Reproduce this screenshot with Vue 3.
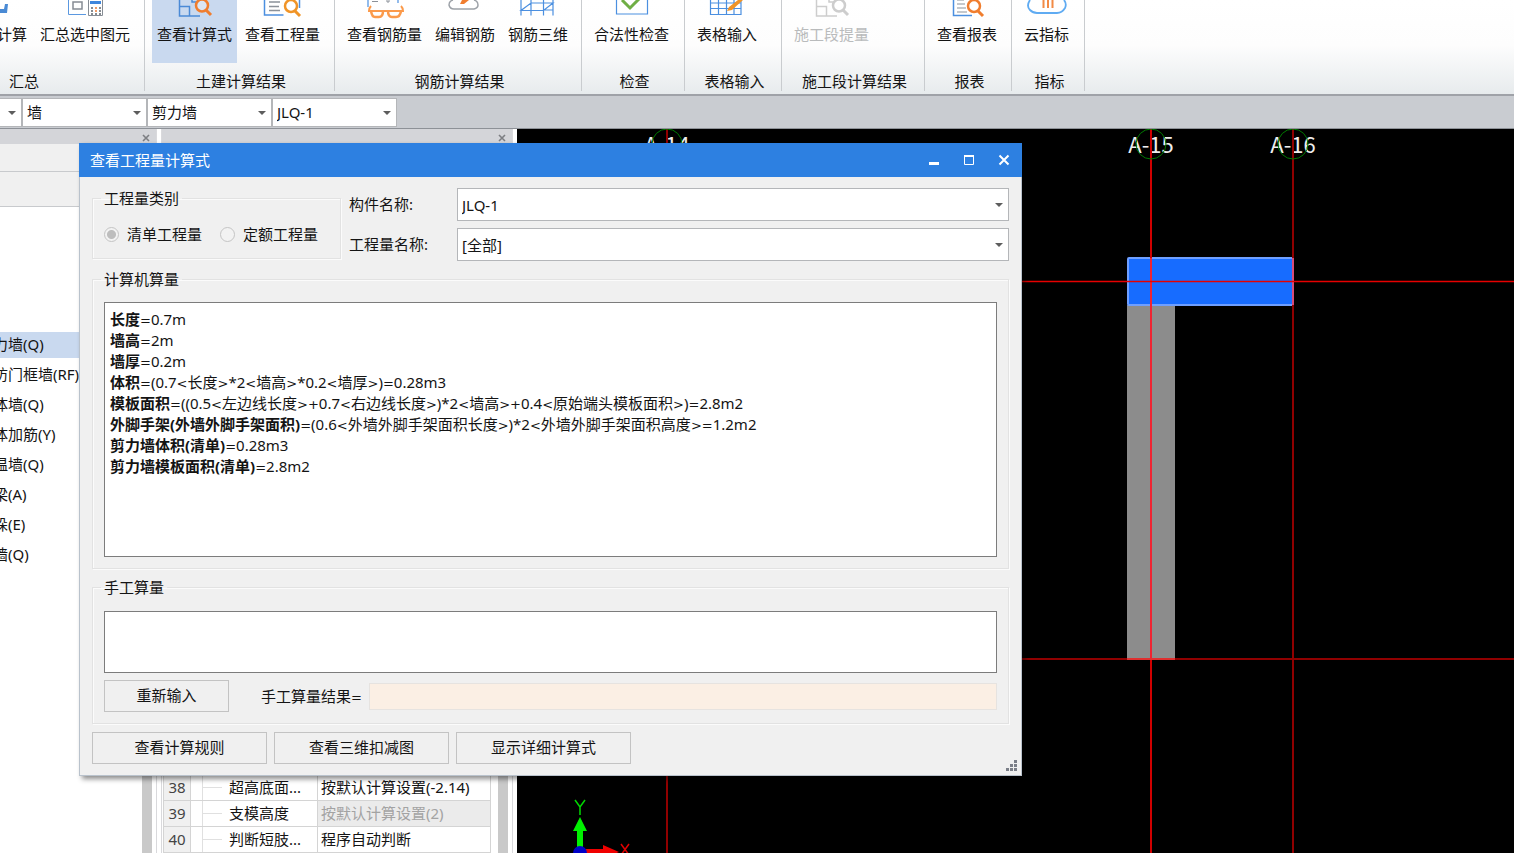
<script setup>
import { ref } from 'vue'

const groups = [
  { label: '汇总', cls: 'g-sum', tools: [{ t: '汇总计算', i: 'sum' }, { t: '汇总选中图元', i: 'pick' }] },
  { label: '土建计算结果', cls: 'g-civil', tools: [{ t: '查看计算式', i: 'formula', on: true }, { t: '查看工程量', i: 'quantity' }] },
  { label: '钢筋计算结果', cls: 'g-rebar', tools: [{ t: '查看钢筋量', i: 'glasses' }, { t: '编辑钢筋', i: 'edit' }, { t: '钢筋三维', i: 'grid3d' }] },
  { label: '检查', cls: 'g-check', tools: [{ t: '合法性检查', i: 'check' }] },
  { label: '表格输入', cls: 'g-table', tools: [{ t: '表格输入', i: 'table' }] },
  { label: '施工段计算结果', cls: 'g-stage', tools: [{ t: '施工段提量', i: 'formula', off: true }] },
  { label: '报表', cls: 'g-report', tools: [{ t: '查看报表', i: 'report' }] },
  { label: '指标', cls: 'g-index', tools: [{ t: '云指标', i: 'cloud' }] }
]

const filters = [
  { name: '楼层', value: '' },
  { name: '构件大类', value: '墙' },
  { name: '构件类型', value: '剪力墙' },
  { name: '构件', value: 'JLQ-1' }
]

const parts = ['剪力墙(Q)', '人防门框墙(RF)', '砌体墙(Q)', '砌体加筋(Y)', '保温墙(Q)', '暗梁(A)', '墙垛(E)', '幕墙(Q)']

const props = [
  { n: 38, name: '超高底面...', value: '按默认计算设置(-2.14)' },
  { n: 39, name: '支模高度', value: '按默认计算设置(2)', off: true },
  { n: 40, name: '判断短肢...', value: '程序自动判断' }
]

const results = [
  ['长度', '=0.7m'],
  ['墙高', '=2m'],
  ['墙厚', '=0.2m'],
  ['体积', '=(0.7<长度>*2<墙高>*0.2<墙厚>)=0.28m3'],
  ['模板面积', '=((0.5<左边线长度>+0.7<右边线长度>)*2<墙高>+0.4<原始端头模板面积>)=2.8m2'],
  ['外脚手架(外墙外脚手架面积)', '=(0.6<外墙外脚手架面积长度>)*2<外墙外脚手架面积高度>=1.2m2'],
  ['剪力墙体积(清单)', '=0.28m3'],
  ['剪力墙模板面积(清单)', '=2.8m2']
].map(([name, text]) => ({ name, tokens: text.split(/([<>=+])/).filter(Boolean) }))

const isOperator = (token) => '<>=+'.includes(token)

const axes = [
  { x: 150, label: 'A-14', c: '#900000' },
  { x: 634, label: 'A-15', c: '#d00000' },
  { x: 776, label: 'A-16', c: '#900000' }
]

const kind = ref('list')
const manual = ref('')
</script>

<template>
  <div class="app">
    <header class="ribbon">
      <section v-for="g in groups" :key="g.label" class="group" :class="g.cls">
        <div class="tools">
          <button v-for="tool in g.tools" :key="tool.t" type="button" class="tool" :class="{ on: tool.on }" :disabled="tool.off">
            <svg class="icon" width="40" height="22" viewBox="0 0 40 22" fill="none" aria-hidden="true">
              <g v-if="tool.i === 'sum'">
                <path d="M10 9H27l1-5h3l-1 9H10z" fill="#4a8ad4" />
              </g>
              <g v-else-if="tool.i === 'pick'">
                <path d="M3.500 0V14.500H21" stroke="#5b98e0" />
                <rect x="8" y="2" width="9" height="7" stroke="#868c94" stroke-width="1.500" />
                <path d="M23.500 0V15.500H37.500V0" stroke="#868c94" />
                <rect x="25" y="1" width="11" height="3" fill="#3f86dc" />
                <path d="M26 8h2M26 11h2M34 8h2M34 11h2M34 14h2" stroke="#5f666e" stroke-width="1.500" />
                <path d="M30 8h2M30 11h2" stroke="#ee7b33" stroke-width="1.500" />
                <path d="M26 14h2M30 14h2" stroke="#5f666e" stroke-width="1.500" />
              </g>
              <g v-else-if="tool.i === 'formula'">
                <path d="M4.500 0V16H25M4.500 6.500H14.500V16M17 0v2h6" :stroke="tool.off ? '#cdcdcd' : '#4b8ad6'" stroke-width="1.500" />
                <circle cx="27" cy="5.500" r="6" :stroke="tool.off ? '#cdcdcd' : '#f07d2e'" stroke-width="2.500" :fill="tool.off ? '#fff' : '#dbe6f5'" />
                <path d="M31 10l5 5" :stroke="tool.off ? '#cdcdcd' : '#f07d2e'" stroke-width="3" />
              </g>
              <g v-else-if="tool.i === 'quantity'">
                <path d="M1.500 0V15H20.500M36.500 0V8" stroke="#4b8fe0" stroke-width="1.500" />
                <path d="M6 2H17M6 6.500H16M6 10.500H17" stroke="#8b9199" stroke-width="1.500" />
                <circle cx="28" cy="6" r="6" stroke="#f09427" stroke-width="2.500" fill="#fff" />
                <path d="M32 11l5 5" stroke="#f09427" stroke-width="3" />
              </g>
              <g v-else-if="tool.i === 'glasses'">
                <path d="M3 0V7M33 0V3" stroke="#4b8fe0" stroke-width="1.200" />
                <path d="M7 1.500H13M22 0v2h2V0" stroke="#8b9199" />
                <path d="M6 6Q4 8 4 11H38Q38 8 36 6" stroke="#fb9a4b" stroke-width="2" />
                <path d="M6 11Q7 17 10 17H14Q18 17 18 11M23 11Q23 17 27 17H31Q35 17 36 11" stroke="#fb9a4b" stroke-width="2.500" />
              </g>
              <g v-else-if="tool.i === 'edit'">
                <path d="M8 0Q4 1 4 5Q5 9 9 9H29Q33 8 33 5Q33 1 29 0" stroke="#9da2a8" stroke-width="1.500" />
                <path d="M15 4l2-4h7l-5 4z" fill="#f07d2e" />
              </g>
              <g v-else-if="tool.i === 'grid3d'">
                <path d="M3 0V15.500M13 0V15.500M25.500 0V15.500M35 0V15.500M3 10.500H25.500L35 3H13zM26 10H35" stroke="#4b8fe0" stroke-width="1.200" />
              </g>
              <g v-else-if="tool.i === 'check'">
                <path d="M4.500 0V14H35.500V0" stroke="#4b8fe0" stroke-width="1.200" />
                <path d="M10 0l8 8 9-9" stroke="#6fae45" stroke-width="3" />
              </g>
              <g v-else-if="tool.i === 'table'">
                <path d="M3.500 0V14.500H34V0M3.500 8.500H34M3.500 3H34M11.500 0V14M19.500 0V14M27 0V14" stroke="#4b8fe0" stroke-width="1.200" />
                <path d="M31 0h5L25 10l-5 1 2-4z" fill="#f09427" />
              </g>
              <g v-else-if="tool.i === 'report'">
                <path d="M6.500 0V15.500H25" stroke="#4b8fe0" stroke-width="1.500" />
                <path d="M10 0H17M10 4H18M10 8H19M10 12H20" stroke="#8b9199" stroke-width="1.200" />
                <circle cx="27" cy="6" r="6" stroke="#f07d2e" stroke-width="2.500" fill="#fff" />
                <path d="M31 11l5 5" stroke="#f07d2e" stroke-width="3" />
              </g>
              <g v-else>
                <path d="M3 0Q-1 6 3 10Q6 13 10 13H30Q35 13 38 8Q40 4 37 0" stroke="#5fabf2" stroke-width="1.800" />
                <path d="M16.500 0V8M21 0V8M25.500 0V8" stroke="#f28a45" stroke-width="2" />
              </g>
            </svg>
            <span>{{ tool.t }}</span>
          </button>
        </div>
        <div class="group-label">{{ g.label }}</div>
      </section>
    </header>

    <nav class="filters">
      <label v-for="f in filters" :key="f.name" class="combo">
        <select :aria-label="f.name">
          <option>{{ f.value }}</option>
        </select>
      </label>
    </nav>

    <main class="work">
      <aside class="nav-panel">
        <div class="panel-head">
          <button type="button" class="close" aria-label="关闭导航">
            <svg width="8" height="8" viewBox="0 0 8 8"><path d="M1 1l6 6M7 1L1 7" stroke="#7d7f83" stroke-width="1.600" /></svg>
          </button>
        </div>
        <div class="band band-a"></div>
        <div class="band band-b"></div>
        <div class="nav-body">
          <ul class="parts">
            <li v-for="(p, i) in parts" :key="p" :class="{ sel: i === 0 }">{{ p }}</li>
          </ul>
          <div class="scroll"></div>
        </div>
      </aside>

      <aside class="prop-panel">
        <div class="panel-head">
          <button type="button" class="close" aria-label="关闭属性">
            <svg width="8" height="8" viewBox="0 0 8 8"><path d="M1 1l6 6M7 1L1 7" stroke="#7d7f83" stroke-width="1.600" /></svg>
          </button>
        </div>
        <div class="prop-body">
          <table class="props">
            <tbody>
              <tr v-for="r in props" :key="r.n">
                <th scope="row">{{ r.n }}</th>
                <td class="name"><i class="branch"></i>{{ r.name }}</td>
                <td class="val" :class="{ off: r.off }">{{ r.value }}</td>
              </tr>
            </tbody>
          </table>
          <div class="scroll"></div>
        </div>
      </aside>

      <section class="canvas">
        <svg class="scene" width="100%" height="100%">
          <rect x="610" y="176" width="48" height="354" fill="#8c8c8c" />
          <rect x="611" y="129" width="165" height="47" rx="1" fill="#176cff" stroke="#6f9fff" stroke-width="2" />
          <text v-for="a in axes" :key="a.label" :x="a.x" y="24" text-anchor="middle" class="axis">{{ a.label }}</text>
          <g v-for="a in axes" :key="a.x">
            <line :x1="a.x" :x2="a.x" y1="0" y2="100%" :stroke="a.c" stroke-width="2" />
            <circle :cx="a.x" cy="15" r="15" fill="none" stroke="#007a00" />
          </g>
          <line x1="634" x2="634" y1="129" y2="530" stroke="#f02432" stroke-width="2" />
          <line x1="776" x2="776" y1="129" y2="176" stroke="#d84a78" stroke-width="2" />
          <line x1="0" x2="100%" y1="152.500" y2="152.500" stroke="#e60000" stroke-width="1.500" />
          <line x1="0" x2="100%" y1="530" y2="530" stroke="#900000" stroke-width="2" />
          <line x1="610" x2="658" y1="530" y2="530" stroke="#e03030" stroke-width="2" />
          <path d="M60 720V702h-4l7-14 7 14h-4v18z" fill="#00f000" />
          <path d="M58 671l5 7 5-7M63 678v8" stroke="#00d800" stroke-width="1.500" fill="none" />
          <path d="M66 720h20v-4l16 7-16 7v-4H66z" fill="#f00000" />
          <path d="M104 715l8 11M112 715l-8 11" stroke="#e00000" stroke-width="1.500" />
          <circle cx="63" cy="724" r="7" fill="#0000c8" />
        </svg>
      </section>
    </main>

    <div class="dialog" role="dialog" aria-labelledby="dlg-title">
      <div class="title-bar">
        <h1 id="dlg-title">查看工程量计算式</h1>
        <button type="button" aria-label="最小化">
          <svg width="12" height="12" viewBox="0 0 12 12"><rect x="1" y="8" width="10" height="3" fill="#fff" /></svg>
        </button>
        <button type="button" aria-label="最大化">
          <svg width="12" height="12" viewBox="0 0 12 12"><path d="M1 1h10v2H1z" fill="#fff" /><path d="M1.500 2v8.500h9V2" fill="none" stroke="#fff" /></svg>
        </button>
        <button type="button" aria-label="关闭">
          <svg width="12" height="12" viewBox="0 0 12 12"><path d="M1.500 1.500l9 9M10.500 1.500l-9 9" stroke="#fff" stroke-width="2" /></svg>
        </button>
      </div>

      <form class="body" @submit.prevent>
        <div class="top">
          <fieldset class="box kinds">
            <legend>工程量类别</legend>
            <label><input v-model="kind" type="radio" name="kind" value="list" />清单工程量</label>
            <label><input v-model="kind" type="radio" name="kind" value="quota" />定额工程量</label>
          </fieldset>
          <div class="fields">
            <label for="part-name">构件名称:</label>
            <span class="combo"><select id="part-name"><option>JLQ-1</option></select></span>
            <label for="qty-name">工程量名称:</label>
            <span class="combo"><select id="qty-name"><option>[全部]</option></select></span>
          </div>
        </div>

        <fieldset class="box auto">
          <legend>计算机算量</legend>
          <div class="sheet">
            <p v-for="r in results" :key="r.name"><b>{{ r.name }}</b><span v-for="(k, i) in r.tokens" :key="i" :class="{ op: isOperator(k) }">{{ k }}</span></p>
          </div>
        </fieldset>

        <fieldset class="box manual">
          <legend>手工算量</legend>
          <textarea v-model="manual" aria-label="手工算量"></textarea>
          <div class="manual-row">
            <button type="button" class="btn" @click="manual = ''">重新输入</button>
            <label for="manual-result">手工算量结果<span class="op">=</span></label>
            <input id="manual-result" type="text" readonly />
          </div>
        </fieldset>

        <div class="actions">
          <button type="button" class="btn">查看计算规则</button>
          <button type="button" class="btn">查看三维扣减图</button>
          <button type="button" class="btn">显示详细计算式</button>
        </div>
      </form>
      <svg class="grip" width="11" height="11" viewBox="0 0 11 11" fill="#7b7f88" aria-hidden="true">
        <path d="M8 0h3v3H8zM4 4h3v3H4zM8 4h3v3H8zM0 8h3v3H0zM4 8h3v3H4zM8 8h3v3H8z" />
      </svg>
    </div>
  </div>
</template>

<style>
html,
body,
#app {
  height: 100%;
}
body {
  margin: 0;
  overflow: hidden;
}
</style>

<style scoped>
.app {
  position: relative;
  height: 100%;
  display: flex;
  flex-direction: column;
  overflow: hidden;
  background: #fff;
  color: #141414;
  font: 15px/20px "Noto Sans", "Noto Sans CJK SC", sans-serif;
}
.app *,
.app *::before,
.app *::after {
  box-sizing: border-box;
}
button,
select,
input,
textarea {
  font: inherit;
  color: inherit;
  margin: 0;
}

.ribbon {
  display: flex;
  flex: none;
  height: 96px;
  padding-bottom: 3px;
  background: linear-gradient(#fff 0, #fdfdfd 45px, #e7ebed 94px);
  border-bottom: 2px solid #9fa2a8;
}
.group {
  display: flex;
  flex-direction: column;
  justify-content: space-between;
  flex: none;
  border-right: 1px solid #c9cccf;
}
.g-sum { width: 244px; margin-left: -99px; }
.g-sum .tools { justify-content: flex-end; padding-right: 9px; }
.g-civil { width: 190px; }
.g-rebar { width: 247px; }
.g-check { width: 103px; }
.g-table { width: 97px; }
.g-stage { width: 143px; }
.g-report { width: 87px; }
.g-index { width: 73px; }
.tools {
  display: flex;
  gap: 3px;
  padding-left: 7px;
}
.tool {
  display: flex;
  flex-direction: column;
  align-items: center;
  height: 63px;
  padding: 0 5px;
  border: 0;
  background: none;
  line-height: 25px;
  white-space: nowrap;
}
.tool.on { background: #c9d9ef; }
.tool:disabled { color: #b9bbbc; }
.icon { display: block; }
.group-label {
  padding-left: 3px;
  text-align: center;
  line-height: 20px;
}

.combo {
  position: relative;
  display: block;
}
.combo select {
  appearance: none;
  display: block;
  width: 100%;
  height: 100%;
  padding: 0 20px 2px 4px;
  border: 1px solid #b4b6b9;
  border-radius: 0;
  background: #fff;
}
.combo::after {
  content: "";
  position: absolute;
  right: 6px;
  top: 50%;
  margin-top: -2px;
  border: 4px solid transparent;
  border-top-color: #5d5d5d;
  border-bottom: 0;
  pointer-events: none;
}
.filters {
  display: flex;
  flex: none;
  height: 33px;
  padding: 2px 0;
  background: #c9ccd1;
  border-bottom: 1px solid #8d9197;
}
.filters .combo { width: 125px; height: 29px; flex: none; }
.filters .combo:first-child { margin-left: -103px; }

.work {
  display: flex;
  flex: 1;
  min-height: 0;
}
.panel-head {
  display: flex;
  justify-content: flex-end;
  flex: none;
  height: 15px;
  background: #d4d5d9;
}
.close {
  display: flex;
  align-items: center;
  padding: 3px 6px 0;
  border: 0;
  background: none;
}
.nav-panel {
  display: flex;
  flex-direction: column;
  width: 157px;
  flex: none;
  border-right: 1px solid #d9d9dc;
}
.band {
  flex: none;
  background: #f0f0f0;
  border-bottom: 1px solid #c8cacd;
}
.band-a { height: 28px; }
.band-b { height: 35px; }
.nav-body {
  display: flex;
  flex: 1;
  min-height: 0;
  padding-right: 4px;
}
.parts {
  flex: 1;
  list-style: none;
  margin: 0;
  padding: 125px 0 0;
  overflow: hidden;
}
.parts li {
  height: 26px;
  margin-bottom: 4px;
  line-height: 25px;
  text-indent: -22px;
  white-space: nowrap;
}
.parts .sel { background: #c9d9ef; }
.scroll {
  width: 10px;
  flex: none;
  background: #c9c9c9;
}
.prop-panel {
  display: flex;
  flex-direction: column;
  width: 352px;
  flex: none;
  margin: 0 4px;
  border: solid #d9d9dc;
  border-width: 0 1px;
}
.prop-body {
  display: flex;
  align-items: flex-end;
  justify-content: space-between;
  flex: 1;
  padding: 0 4px 0 1px;
  min-height: 0;
}
.prop-body .scroll { align-self: stretch; }
.props {
  border-collapse: collapse;
  table-layout: fixed;
  width: 328px;
}
.props th,
.props td {
  height: 26px;
  padding: 0 0 0 3px;
  border: 1px solid #d4d4d4;
  line-height: 25px;
  white-space: nowrap;
}
.props th {
  width: 27px;
  padding: 0;
  font-weight: 400;
  color: #444;
  background: #f0f0f0;
  text-align: center;
}
.props .name { width: 127px; padding-left: 11px; }
.branch {
  display: inline-block;
  width: 20px;
  height: 25px;
  margin-right: 7px;
  vertical-align: top;
  border-left: 1px solid #e0e0e0;
  background: linear-gradient(#e0e0e0, #e0e0e0) 0 12px / 100% 1px no-repeat;
}
.props .off { color: #a3a3a3; background: #ebebeb; }

.canvas {
  flex: 1;
  min-width: 0;
  background: #000;
}
.scene { display: block; }
.axis {
  font: 22px "Noto Sans CJK SC", sans-serif;
  fill: #eee;
}

.dialog {
  position: absolute;
  left: 79px;
  top: 143px;
  width: 943px;
  border: 1px solid #b9c2cc;
  border-top: 0;
  background: #f0f0f0;
  box-shadow: 3px 3px 5px rgba(0, 0, 0, 0.45);
}
.title-bar {
  display: flex;
  align-items: center;
  height: 34px;
  margin: 0 -1px;
  padding: 0 1px 0 11px;
  background: #2d80e1;
  color: #fff;
}
.title-bar h1 {
  flex: 1;
  margin: 0;
  font-size: 15px;
  font-weight: 400;
}
.title-bar button {
  display: flex;
  align-items: center;
  justify-content: center;
  width: 35px;
  height: 34px;
  padding: 0;
  border: 0;
  background: none;
}
.body {
  padding: 11px 12px;
}
.box {
  min-width: 0;
  margin: 0;
  border: 1px solid #e2e2e2;
  box-shadow: inset 1px 1px #fbfbfb, 1px 1px #fbfbfb;
}
.box legend {
  margin-left: -3px;
  padding: 0 3px;
  line-height: 20px;
}
.top {
  display: flex;
  gap: 8px;
}
.kinds {
  display: flex;
  gap: 18px;
  width: 249px;
  height: 71px;
  padding: 15px 0 0 11px;
}
.kinds label {
  display: flex;
  align-items: center;
  gap: 8px;
  height: 22px;
}
.kinds input {
  appearance: none;
  width: 15px;
  height: 15px;
  border: 1px solid #c4c4c4;
  border-radius: 50%;
  background: #f2f2f2;
}
.kinds input:checked {
  background: radial-gradient(#bdbdbd 0 4px, #f2f2f2 5px);
}
.fields {
  display: grid;
  grid-template-columns: 100px 1fr;
  grid-auto-rows: 33px;
  gap: 7px 8px;
  flex: 1;
  line-height: 33px;
}
.auto {
  margin-top: 8px;
  padding: 13px 11px 11px;
}
.sheet {
  height: 255px;
  padding: 6px 5px;
  border: 1px solid #7c7c7c;
  background: #fff;
  overflow: auto;
}
.sheet p {
  margin: 0;
  line-height: 21px;
  white-space: nowrap;
}
.op {
  font-family: "DejaVu Sans", sans-serif;
  font-size: 13px;
  line-height: 1;
}
.manual {
  margin-top: 8px;
  padding: 14px 11px 11px;
}
.manual textarea {
  display: block;
  width: 100%;
  height: 62px;
  border: 1px solid #7c7c7c;
  border-radius: 0;
  background: #fff;
  resize: none;
}
.manual-row {
  display: flex;
  align-items: center;
  margin-top: 7px;
}
.manual-row label { margin: 0 7px 0 32px; }
.manual-row input {
  flex: 1;
  height: 27px;
  border: 1px solid #e6e3e0;
  background: #fbefe4;
}
.btn {
  width: 175px;
  height: 32px;
  padding: 0 0 2px;
  border: 1px solid #c3c3c3;
  border-radius: 0;
  background: #f0f0f0;
}
.manual-row .btn { width: 125px; }
.actions {
  display: flex;
  gap: 7px;
  margin-top: 8px;
}
.grip {
  position: absolute;
  right: 4px;
  bottom: 4px;
}
</style>
